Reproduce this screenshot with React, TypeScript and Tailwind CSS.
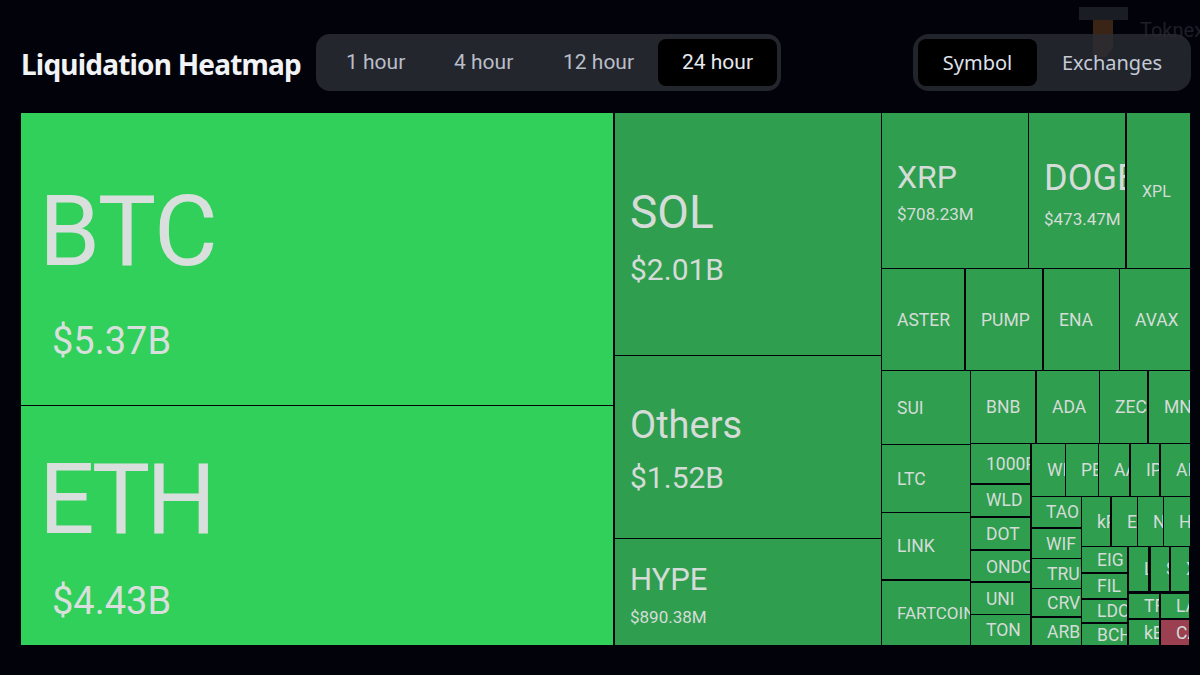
import React from "react";

const font = { fontFamily: "Roboto, 'Noto Sans', sans-serif" };

function C({ c, t, s, sc = "", tc = "text-[17.5px]", p = "pt-[2px]" }: { c: string; t: string; s?: string; sc?: string; tc?: string; p?: string }) {
  return (
    <div className={`flex flex-col justify-center overflow-hidden whitespace-nowrap bg-[#2f9e4f] text-[#d5dcd8] ${p} ${c}`}>
      <div className={`leading-none ${tc}`}>{t}</div>
      {s && <div className={`leading-none ${sc}`}>{s}</div>}
    </div>
  );
}

function Big({ c, t, s, tc, sc }: { c: string; t: string; s: string; tc: string; sc: string }) {
  return (
    <div className={`flex flex-col justify-center overflow-hidden bg-[#30d05a] pl-[18px] text-[#d9dfdc] ${c}`}>
      <div className={`text-[98px] leading-none ${tc}`}>{t}</div>
      <div className={`pl-[13px] text-[38px] leading-none ${sc}`}>{s}</div>
    </div>
  );
}

export default function App() {
  return (
    <div className="relative h-[675px] w-[1200px] overflow-hidden bg-[#02030a]" style={font}>
      <div className="absolute left-[1079px] top-[7px] flex">
        <svg width="50" height="50" viewBox="0 0 50 50">
          <rect x="0" y="0" width="49" height="13" fill="#1b1d24" />
          <path d="M14 13h20v28l-12 15h-8z" fill="#3a2415" />
        </svg>
        <span className="ml-[11px] mt-[13px] text-[20px] leading-none text-[#1d1f26]">Toknex</span>
      </div>

      <div className="relative flex flex-col pl-[21px] pt-[34px]">
        <div className="flex h-[57px] items-center">
          <h1
            className="w-[295px] pt-[2px] text-[28px] font-bold leading-none tracking-[-0.8px] text-[#f1f3f6]"
            style={{ fontFamily: "'Noto Sans', sans-serif" }}
          >
            Liquidation Heatmap
          </h1>
          <div className="flex h-[57px] w-[465px] items-center rounded-[14px] bg-[#2a2d34]/85 pl-[5px] text-[21px] text-[#b8bec9]">
            <span className="w-[107px] pl-[25px]">1 hour</span>
            <span className="w-[112px] pl-[26px]">4 hour</span>
            <span className="w-[118px] pl-[23px]">12 hour</span>
            <span className="flex h-[47px] w-[119px] items-center justify-center rounded-[8px] bg-[#000000] text-[#e6e8ee]">
              24 hour
            </span>
          </div>
          <div
            className="ml-[132px] flex h-[57px] w-[278px] items-center rounded-[16px] bg-[#2a2d34]/80 pl-[5px] text-[20px] text-[#c4cad6]"
            style={{ fontFamily: "'Noto Sans', sans-serif" }}
          >
            <span className="flex h-[47px] w-[119px] items-center justify-center rounded-[8px] bg-[#000000] text-[#dfe2ea]">
              Symbol
            </span>
            <span className="pl-[25px]">Exchanges</span>
          </div>
        </div>

        <div className="mt-[22px] flex h-[532px] w-[1169px] gap-[2px] text-[#d5dcd8]">
          <div className="flex w-[592px] flex-col gap-px">
            <Big c="h-[292px] pt-[24px]" t="BTC" s="$5.37B" tc="tracking-[-1px]" sc="mt-[41px]" />
            <Big c="h-[239px] pt-[20px]" t="ETH" s="$4.43B" tc="tracking-[-4px]" sc="mt-[33px]" />
          </div>
          <div className="flex w-[266px] flex-col gap-px">
            <C c="h-[242px] pl-[15px]" p="pt-[6px]" t="SOL" tc="text-[46px]" s="$2.01B" sc="mt-[20px] text-[30px]" />
            <C c="h-[182px] pl-[15px]" p="pt-[4px]" t="Others" tc="text-[38px]" s="$1.52B" sc="mt-[19px] text-[30px]" />
            <C c="h-[106px] pl-[15px]" p="pt-[6px]" t="HYPE" tc="text-[31px]" s="$890.38M" sc="mt-[14px] text-[17px]" />
          </div>
          <div className="ml-[-1px] flex w-[308px] flex-col gap-px">
            <div className="flex h-[155px] gap-px">
              <C c="w-[146px] pl-[15px]" t="XRP" tc="text-[32px]" s="$708.23M" sc="mt-[13px] text-[17px]" />
              <C c="w-[96px] pl-[15px]" p="pt-[6px]" t="DOGE" tc="text-[36px]" s="$473.47M" sc="mt-[15px] text-[17px]" />
              <C c="ml-px w-[63px] pl-[15px]" t="XPL" tc="text-[16px]" />
            </div>
            <div className="flex h-[101px] gap-px">
              <C c="w-[82px] pl-[15px]" t="ASTER" />
              <C c="ml-px w-[76px] pl-[15px]" t="PUMP" />
              <C c="ml-px w-[75px] pl-[15px]" t="ENA" />
              <C c="w-[70px] pl-[15px]" t="AVAX" />
            </div>
            <div className="flex h-[274px] gap-px">
              <div className="flex w-[88px] flex-col gap-px">
                <C c="h-[73px] pl-[15px]" t="SUI" />
                <C c="h-[67px] pl-[15px]" t="LTC" />
                <C c="h-[66px] pl-[15px]" t="LINK" />
                <C c="mt-px h-[64px] pl-[15px]" p="pt-0" t="FARTCOIN" tc="text-[17px]" />
              </div>
              <div className="flex w-[219px] flex-col gap-px">
                <div className="flex h-[72px] gap-px">
                  <C c="w-[64px] pl-[15px]" t="BNB" />
                  <C c="ml-px w-[62px] pl-[15px]" t="ADA" />
                  <C c="w-[47px] pl-[15px]" t="ZEC" />
                  <C c="ml-px w-[41px] pl-[15px]" t="MNT" />
                </div>
                <div className="flex h-[201px] gap-px">
                  <div className="flex w-[59px] flex-col gap-px">
                    <C c="h-[39px] pl-[15px]" t="1000PEPE" />
                    <C c="mt-px h-[31px] pl-[15px]" t="WLD" />
                    <C c="mt-px h-[32px] pl-[15px]" t="DOT" />
                    <C c="mt-px h-[30px] pl-[15px]" t="ONDO" />
                    <C c="mt-px h-[31px] pl-[15px]" t="UNI" />
                    <C c="h-[30px] pl-[15px]" t="TON" />
                  </div>
                  <div className="ml-px flex w-[158px] flex-col gap-px">
                    <div className="flex h-[52px] gap-px">
                      <C c="w-[33px] pl-[15px]" t="WIF" />
                      <C c="w-[32px] pl-[15px]" t="PEPE" />
                      <C c="w-[30px] pl-[15px]" t="AAVE" />
                      <C c="ml-px w-[28px] pl-[15px]" t="IP" />
                      <C c="ml-px w-[29px] pl-[15px]" t="AI" />
                    </div>
                    <div className="flex h-[148px] gap-px">
                      <div className="flex w-[49px] flex-col gap-px">
                        <C c="h-[30px] pl-[14px]" t="TAO" />
                        <C c="mt-px h-[29px] pl-[14px]" t="WIF" />
                        <C c="h-[29px] pl-[15px]" t="TRUMP" />
                        <C c="h-[27px] pl-[15px]" t="CRV" />
                        <C c="mt-px h-[27px] pl-[15px]" t="ARB" />
                      </div>
                      <div className="flex w-[108px] flex-col gap-px">
                        <div className="flex h-[49px] gap-px">
                          <C c="w-[28px] pl-[15px]" t="kPEPE" />
                          <C c="ml-px w-[25px] pl-[15px]" t="ETC" />
                          <C c="w-[25px] pl-[15px]" t="NEAR" />
                          <C c="w-[26px] pl-[15px]" t="HBAR" />
                        </div>
                        <div className="flex h-[98px] gap-[2px]">
                          <div className="flex w-[45px] flex-col gap-px">
                            <C c="h-[25px] pl-[15px]" t="EIG" />
                            <C c="mt-px h-[24px] pl-[15px]" t="FIL" />
                            <C c="mt-px h-[22px] pl-[15px]" t="LDO" />
                            <C c="mt-px h-[21px] pl-[15px]" t="BCH" />
                          </div>
                          <div className="flex w-[60px] flex-col">
                            <div className="flex h-[44px] gap-[2px]">
                              <C c="w-[19px] pl-[15px]" t="LINK" />
                              <C c="ml-px w-[18px] pl-[15px]" t="SEI" />
                              <C c="w-[18px] pl-[15px]" t="XLM" />
                            </div>
                            <div className="mt-[3px] flex h-[51px] gap-[2px]">
                              <div className="flex w-[30px] flex-col gap-[2px]">
                                <C c="h-[24px] pl-[15px]" t="TRX" />
                                <C c="h-[25px] pl-[15px]" t="kBONK" />
                              </div>
                              <div className="flex w-[28px] flex-col gap-[2px]">
                                <C c="h-[24px] pl-[15px]" t="LAYER" />
                                <div className="flex h-[25px] items-center overflow-hidden whitespace-nowrap bg-[#9b4050] pl-[15px] pt-[2px] text-[17.5px] leading-none text-[#d5dcd8]">
                                  CAKE
                                </div>
                              </div>
                            </div>
                          </div>
                        </div>
                      </div>
                    </div>
                  </div>
                </div>
              </div>
            </div>
          </div>
        </div>
      </div>
    </div>
  );
}
